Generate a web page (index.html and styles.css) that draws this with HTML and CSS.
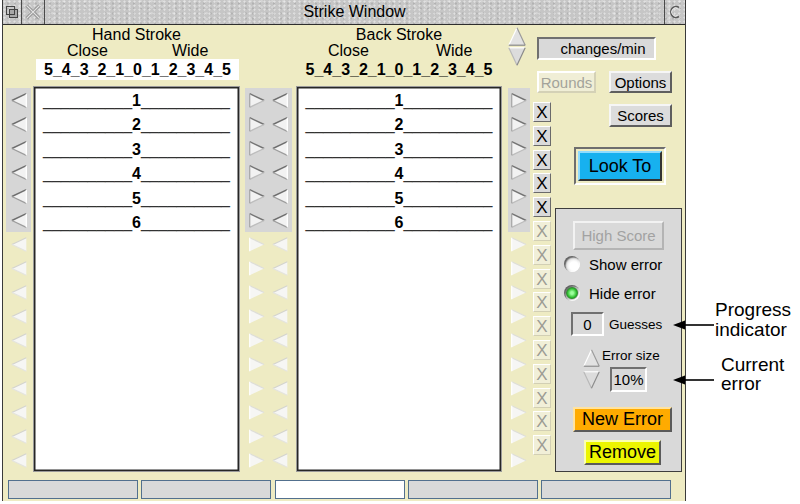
FILE: index.html
```html
<!DOCTYPE html>
<html>
<head>
<meta charset="utf-8">
<title>Strike Window</title>
<link rel="stylesheet" href="styles.css">
</head>
<body>
<svg class="defs" width="0" height="0" aria-hidden="true">
  <defs>
    <symbol id="tl" viewBox="0 0 16 15"><path d="M15.3 0.7 L0.9 7.5 L15.3 14.3 Z" fill="#f2f2f2"/><path d="M15.3 0.7 L0.9 7.5" stroke="#6e6e6e" stroke-width="1.4" fill="none"/><path d="M0.9 7.5 L15.3 14.3" stroke="#9c9c9c" stroke-width="1.3" fill="none"/><path d="M15.3 0.7 V14.3" stroke="#ffffff" stroke-width="1.3" fill="none"/></symbol>
    <symbol id="tli" viewBox="0 0 16 15"><path d="M15.3 0.7 L0.9 7.5 L15.3 14.3 Z" fill="#f6f6f4"/><path d="M15.3 0.7 L0.9 7.5" stroke="#d4d4ce" stroke-width="1.2" fill="none"/><path d="M0.9 7.5 L15.3 14.3" stroke="#e4e4de" stroke-width="1.2" fill="none"/></symbol>
    <symbol id="tr" viewBox="0 0 16 15"><path d="M0.7 0.7 L15.1 7.5 L0.7 14.3 Z" fill="#f2f2f2"/><path d="M0.7 0.7 L15.1 7.5" stroke="#747474" stroke-width="1.4" fill="none"/><path d="M15.1 7.5 L0.7 14.3" stroke="#bdbdbd" stroke-width="1.3" fill="none"/><path d="M0.7 0.7 V14.3" stroke="#a8a8a8" stroke-width="1.3" fill="none"/></symbol>
    <symbol id="tri" viewBox="0 0 16 15"><path d="M0.7 0.7 L15.1 7.5 L0.7 14.3 Z" fill="#f6f6f4"/><path d="M0.7 0.7 L15.1 7.5" stroke="#deded8" stroke-width="1.2" fill="none"/><path d="M0.7 0.7 V14.3" stroke="#ffffff" stroke-width="1.2" fill="none"/></symbol>
    <symbol id="up" viewBox="0 0 18 19"><path d="M9 0.8 L17.2 18.2 L0.8 18.2 Z" fill="#e2e2e2"/><path d="M9 0.8 L0.8 18.2" stroke="#ffffff" stroke-width="1.2" fill="none"/><path d="M9 0.8 L17.2 18.2" stroke="#9a9a9a" stroke-width="1.2" fill="none"/><path d="M0.8 18.2 H17.2" stroke="#8a8a8a" stroke-width="1.2" fill="none"/></symbol>
    <symbol id="down" viewBox="0 0 18 19"><path d="M0.8 0.8 L17.2 0.8 L9 18.2 Z" fill="#dcdcdc"/><path d="M0.8 0.8 H17.2" stroke="#ffffff" stroke-width="1.2" fill="none"/><path d="M0.8 0.8 L9 18.2" stroke="#b8b8b8" stroke-width="1.2" fill="none"/><path d="M17.2 0.8 L9 18.2" stroke="#8a8a8a" stroke-width="1.2" fill="none"/></symbol>
  </defs>
</svg>

<div class="window">
  <div class="titlebar">
    <div class="tb-icon tb-back"><svg width="14" height="14" viewBox="0 0 14 14"><rect x="4.5" y="4.5" width="8" height="8" fill="#a8a8a8" stroke="#444"/><rect x="1.5" y="1.5" width="8" height="8" fill="none" stroke="#444"/></svg></div>
    <div class="tb-icon tb-close"><svg width="18" height="18" viewBox="0 0 18 18"><path d="M2.5 2.5 L15.5 15.5 M15.5 2.5 L2.5 15.5" stroke="#8a8a8a" stroke-width="3" fill="none"/><path d="M2.5 2.5 L15.5 15.5 M15.5 2.5 L2.5 15.5" stroke="#e2e2e2" stroke-width="1.2" fill="none"/></svg></div>
    <div class="tb-title">Strike Window</div>
    <div class="tb-icon tb-toggle"><svg width="14" height="16" viewBox="0 0 14 16"><path d="M11 3.5 A5.2 5.5 0 1 0 11 12.5" stroke="#5a5a5a" stroke-width="1.6" fill="none"/><path d="M10 5 A3.8 4 0 1 0 10 11" stroke="#e8e8e8" stroke-width="1" fill="none"/></svg></div>
  </div>

  <div class="main">
    <div class="hdr hand">
      <div class="t">Hand Stroke</div>
      <div class="cw"><span>Close</span><span>Wide</span></div>
      <div class="scale white">5_4_3_2_1_0_1_2_3_4_5</div>
    </div>
    <div class="hdr back">
      <div class="t">Back Stroke</div>
      <div class="cw"><span>Close</span><span>Wide</span></div>
      <div class="scale">5_4_3_2_1_0_1_2_3_4_5</div>
    </div>

    <div class="lcol">
      <div class="acell on"><svg class="tri"><use href="#tl"/></svg></div>
      <div class="acell on"><svg class="tri"><use href="#tl"/></svg></div>
      <div class="acell on"><svg class="tri"><use href="#tl"/></svg></div>
      <div class="acell on"><svg class="tri"><use href="#tl"/></svg></div>
      <div class="acell on"><svg class="tri"><use href="#tl"/></svg></div>
      <div class="acell on"><svg class="tri"><use href="#tl"/></svg></div>
      <div class="acell"><svg class="tri"><use href="#tli"/></svg></div>
      <div class="acell"><svg class="tri"><use href="#tli"/></svg></div>
      <div class="acell"><svg class="tri"><use href="#tli"/></svg></div>
      <div class="acell"><svg class="tri"><use href="#tli"/></svg></div>
      <div class="acell"><svg class="tri"><use href="#tli"/></svg></div>
      <div class="acell"><svg class="tri"><use href="#tli"/></svg></div>
      <div class="acell"><svg class="tri"><use href="#tli"/></svg></div>
      <div class="acell"><svg class="tri"><use href="#tli"/></svg></div>
      <div class="acell"><svg class="tri"><use href="#tli"/></svg></div>
      <div class="acell"><svg class="tri"><use href="#tli"/></svg></div>
    </div>

    <div class="list hand-list">
      <div class="row">__________<b>1</b>__________</div>
      <div class="row">__________<b>2</b>__________</div>
      <div class="row">__________<b>3</b>__________</div>
      <div class="row">__________<b>4</b>__________</div>
      <div class="row">__________<b>5</b>__________</div>
      <div class="row">__________<b>6</b>__________</div>
    </div>

    <div class="mcol">
      <div class="acol c1">
        <div class="acell on"><svg class="tri"><use href="#tr"/></svg></div>
        <div class="acell on"><svg class="tri"><use href="#tr"/></svg></div>
        <div class="acell on"><svg class="tri"><use href="#tr"/></svg></div>
        <div class="acell on"><svg class="tri"><use href="#tr"/></svg></div>
        <div class="acell on"><svg class="tri"><use href="#tr"/></svg></div>
        <div class="acell on"><svg class="tri"><use href="#tr"/></svg></div>
        <div class="acell"><svg class="tri"><use href="#tri"/></svg></div>
        <div class="acell"><svg class="tri"><use href="#tri"/></svg></div>
        <div class="acell"><svg class="tri"><use href="#tri"/></svg></div>
        <div class="acell"><svg class="tri"><use href="#tri"/></svg></div>
        <div class="acell"><svg class="tri"><use href="#tri"/></svg></div>
        <div class="acell"><svg class="tri"><use href="#tri"/></svg></div>
        <div class="acell"><svg class="tri"><use href="#tri"/></svg></div>
        <div class="acell"><svg class="tri"><use href="#tri"/></svg></div>
        <div class="acell"><svg class="tri"><use href="#tri"/></svg></div>
        <div class="acell"><svg class="tri"><use href="#tri"/></svg></div>
      </div>
      <div class="acol c2">
        <div class="acell on"><svg class="tri"><use href="#tl"/></svg></div>
        <div class="acell on"><svg class="tri"><use href="#tl"/></svg></div>
        <div class="acell on"><svg class="tri"><use href="#tl"/></svg></div>
        <div class="acell on"><svg class="tri"><use href="#tl"/></svg></div>
        <div class="acell on"><svg class="tri"><use href="#tl"/></svg></div>
        <div class="acell on"><svg class="tri"><use href="#tl"/></svg></div>
        <div class="acell"><svg class="tri"><use href="#tli"/></svg></div>
        <div class="acell"><svg class="tri"><use href="#tli"/></svg></div>
        <div class="acell"><svg class="tri"><use href="#tli"/></svg></div>
        <div class="acell"><svg class="tri"><use href="#tli"/></svg></div>
        <div class="acell"><svg class="tri"><use href="#tli"/></svg></div>
        <div class="acell"><svg class="tri"><use href="#tli"/></svg></div>
        <div class="acell"><svg class="tri"><use href="#tli"/></svg></div>
        <div class="acell"><svg class="tri"><use href="#tli"/></svg></div>
        <div class="acell"><svg class="tri"><use href="#tli"/></svg></div>
        <div class="acell"><svg class="tri"><use href="#tli"/></svg></div>
      </div>
    </div>

    <div class="list back-list">
      <div class="row">__________<b>1</b>__________</div>
      <div class="row">__________<b>2</b>__________</div>
      <div class="row">__________<b>3</b>__________</div>
      <div class="row">__________<b>4</b>__________</div>
      <div class="row">__________<b>5</b>__________</div>
      <div class="row">__________<b>6</b>__________</div>
    </div>

    <div class="rgn">
      <div class="updown">
        <svg class="ud"><use href="#up"/></svg>
        <svg class="ud"><use href="#down"/></svg>
      </div>
      <div class="racol">
        <div class="acell on"><svg class="tri"><use href="#tr"/></svg></div>
        <div class="acell on"><svg class="tri"><use href="#tr"/></svg></div>
        <div class="acell on"><svg class="tri"><use href="#tr"/></svg></div>
        <div class="acell on"><svg class="tri"><use href="#tr"/></svg></div>
        <div class="acell on"><svg class="tri"><use href="#tr"/></svg></div>
        <div class="acell on"><svg class="tri"><use href="#tr"/></svg></div>
        <div class="acell"><svg class="tri"><use href="#tri"/></svg></div>
        <div class="acell"><svg class="tri"><use href="#tri"/></svg></div>
        <div class="acell"><svg class="tri"><use href="#tri"/></svg></div>
        <div class="acell"><svg class="tri"><use href="#tri"/></svg></div>
        <div class="acell"><svg class="tri"><use href="#tri"/></svg></div>
        <div class="acell"><svg class="tri"><use href="#tri"/></svg></div>
        <div class="acell"><svg class="tri"><use href="#tri"/></svg></div>
        <div class="acell"><svg class="tri"><use href="#tri"/></svg></div>
        <div class="acell"><svg class="tri"><use href="#tri"/></svg></div>
        <div class="acell"><svg class="tri"><use href="#tri"/></svg></div>
      </div>
      <div class="xcol">
        <div class="xb">X</div>
        <div class="xb">X</div>
        <div class="xb">X</div>
        <div class="xb">X</div>
        <div class="xb">X</div>
        <div class="xb off">X</div>
        <div class="xb off">X</div>
        <div class="xb off">X</div>
        <div class="xb off">X</div>
        <div class="xb off">X</div>
        <div class="xb off">X</div>
        <div class="xb off">X</div>
        <div class="xb off">X</div>
        <div class="xb off">X</div>
        <div class="xb off">X</div>
      </div>
      <div class="stack">
        <div class="field cpm">changes/min</div>
        <div class="rrow">
          <div class="btn dis rounds">Rounds</div>
          <div class="btn options">Options</div>
        </div>
        <div class="btn scores">Scores</div>
        <div class="lookf"><div class="btn look">Look To</div></div>
        <div class="panel">
          <div class="btn pdis hs">High Score</div>
          <div class="rad r1"><span class="radio"></span><span>Show error</span></div>
          <div class="rad r2"><span class="radio on"></span><span>Hide error</span></div>
          <div class="guess"><div class="field gfield">0</div><span class="glabel">Guesses</span></div>
          <div class="esz">
            <div class="eud">
              <svg class="ud2"><use href="#up"/></svg>
              <svg class="ud2"><use href="#down"/></svg>
            </div>
            <div class="eright">
              <div class="elabel">Error size</div>
              <div class="field efield">10%</div>
            </div>
          </div>
          <div class="btn newerr">New Error</div>
          <div class="btn remove">Remove</div>
        </div>
      </div>
    </div>
  </div>

  <div class="status">
    <div class="seg"></div>
    <div class="seg"></div>
    <div class="seg white"></div>
    <div class="seg"></div>
    <div class="seg"></div>
  </div>
</div>

<div class="note n1">Progress<br>indicator</div>
<svg class="pointer p1" width="42" height="12" viewBox="0 0 42 12"><path d="M10 6 H41" stroke="#000" stroke-width="1.6"/><path d="M0 6 L12 1.5 L12 10.5 Z" fill="#000"/></svg>
<div class="note n2">Current<br>error</div>
<svg class="pointer p2" width="42" height="12" viewBox="0 0 42 12"><path d="M10 6 H41" stroke="#000" stroke-width="1.6"/><path d="M0 6 L12 1.5 L12 10.5 Z" fill="#000"/></svg>
</body>
</html>
```

FILE: styles.css
```css
* { box-sizing: border-box; }

body {
  margin: 0;
  width: 800px;
  height: 504px;
  overflow: hidden;
  background: #ffffff;
  font-family: "Liberation Sans", Arial, sans-serif;
  color: #000;
  position: relative;
}

.defs { position: absolute; width: 0; height: 0; }

.window {
  margin-left: 2px;
  width: 684px;
  height: 501px;
  border-left: 1px solid #3a3a3a;
  border-right: 1px solid #3a3a3a;
  background: #eeebc3;
  display: flex;
  flex-direction: column;
}

/* title bar */
.titlebar {
  flex: none;
  height: 25px;
  display: flex;
  border-bottom: 1px solid #2e2e2e;
  background-color: #c6c6c6;
  background-image:
    radial-gradient(circle at 30% 40%, rgba(255,255,255,0.45) 0 0.8px, transparent 1.4px),
    radial-gradient(circle at 70% 70%, rgba(0,0,0,0.10) 0 0.8px, transparent 1.4px),
    radial-gradient(circle at 50% 20%, rgba(255,255,255,0.25) 0 1px, transparent 1.6px);
  background-size: 5px 4px, 7px 5px, 11px 6px;
}
.tb-icon { display: flex; align-items: center; justify-content: center; }
.tb-back { width: 19px; border-right: 1px solid #4a4a4a; }
.tb-close { width: 23px; border-right: 1px solid #4a4a4a; }
.tb-title {
  flex: 1;
  border-right: 1px solid #4a4a4a;
  text-align: center;
  font-size: 16px;
  line-height: 24px;
}
.tb-toggle { width: 20px; }

/* main grid */
.main {
  flex: none;
  display: grid;
  grid-template-columns: 30px 207px 56px 206px 183px;
  grid-template-rows: 61px 388px;
}

.hdr { padding-top: 2px; font-size: 16px; text-align: center; }
.hdr.hand { grid-column: 2; grid-row: 1; }
.hdr.back { grid-column: 4; grid-row: 1; }
.hdr .t { line-height: 16px; }
.hdr .cw { display: flex; line-height: 16px; }
.hand .cw { padding-left: 34px; gap: 64px; }
.back .cw { padding-left: 32px; gap: 67px; }
.scale {
  font-weight: bold;
  height: 21px;
  line-height: 22px;
  white-space: nowrap;
}
.scale.white { background: #fff; margin-left: 3px; width: 203px; }

/* arrow columns */
.acell {
  height: 24px;
  display: flex;
  align-items: center;
  justify-content: center;
}
.acell.on { background: #d6d6d6; }
.tri { width: 16px; height: 15px; }

.lcol { grid-column: 1; grid-row: 2; padding: 2px 0 0 3px; }
.lcol .acell { width: 25px; }

.mcol { grid-column: 3; grid-row: 2; display: flex; padding: 2px 0 0 5px; }
.mcol .c1 { width: 23px; }
.mcol .c2 { width: 24px; }

/* lists */
.list {
  grid-row: 2;
  height: 386px;
  background: #fff;
  border: 1px solid #9a9a9a;
  box-shadow: inset 0 0 0 1.5px #262626;
  padding-top: 2px;
}
.hand-list { grid-column: 2; }
.back-list { grid-column: 4; }
.list .row {
  height: 24.4px;
  line-height: 24.4px;
  text-align: center;
  font-size: 16px;
  white-space: nowrap;
  color: #333;
}
.list .row b { color: #000; }

/* right region */
.rgn {
  grid-column: 5;
  grid-row: 1 / 3;
  display: grid;
  grid-template-columns: 6px 22px 3px 18px 2px 132px;
  grid-template-rows: 63px 386px;
}
.updown {
  grid-column: 2;
  grid-row: 1;
  padding-top: 2px;
  display: flex;
  flex-direction: column;
  gap: 1px;
}
.ud { width: 18px; height: 19px; }
.racol { grid-column: 2; grid-row: 2; }
.xcol {
  grid-column: 4;
  grid-row: 2;
  padding-top: 14px;
  display: flex;
  flex-direction: column;
  gap: 3.8px;
}
.xb {
  width: 18px;
  height: 20px;
  background: #dadada;
  border: 1px solid;
  border-color: #ffffff #6a6a6a #6a6a6a #ffffff;
  font-size: 17px;
  line-height: 19px;
  text-align: center;
  color: #000;
}
.xb.off {
  background: #f1efd8;
  border-color: #ffffff #d2cfb4 #d2cfb4 #ffffff;
  color: #9c9c94;
}

.stack {
  grid-column: 4 / 7;
  grid-row: 1 / 3;
  display: flex;
  flex-direction: column;
  align-items: flex-start;
  padding-top: 12px;
}

.field {
  background: #d9d9d9;
  border: 2px solid;
  border-color: #707070 #ffffff #ffffff #707070;
  font-size: 15px;
  display: flex;
  align-items: center;
  justify-content: center;
}
.cpm { margin-left: 4px; width: 119px; height: 23px; padding-left: 13px; }

.btn {
  background: #dcdcdc;
  border: 2px solid;
  border-color: #f6f6f6 #5e5e5e #5e5e5e #f6f6f6;
  font-size: 15px;
  display: flex;
  align-items: center;
  justify-content: center;
  white-space: nowrap;
}
.btn.dis {
  background: #f0eed6;
  border-color: #ffffff #d4d1b6 #d4d1b6 #ffffff;
  color: #a3a39a;
}
.rrow { margin-top: 11px; margin-left: 4px; display: flex; gap: 13px; }
.rounds { width: 59px; height: 22px; }
.options { width: 63px; height: 22px; }
.scores { margin-top: 11px; margin-left: 76px; width: 63px; height: 23px; }

.lookf {
  margin-top: 20px;
  margin-left: 41px;
  width: 92px;
  height: 38px;
  border: 2px solid;
  border-color: #6e6e6e #ffffff #ffffff #6e6e6e;
  padding: 2px;
}
.btn.look {
  width: 100%;
  height: 100%;
  background: #17b1ef;
  border-color: #8fdcff #333 #333 #8fdcff;
  font-size: 18px;
}

.panel {
  margin-top: 23px;
  margin-left: 22px;
  width: 127px;
  height: 264px;
  background: #d9d9d9;
  border: 1px solid #3d3d3d;
  display: flex;
  flex-direction: column;
  align-items: flex-start;
}
.btn.pdis {
  background: #d9d9d9;
  border-color: #f2f2f2 #b4b4b4 #b4b4b4 #f2f2f2;
  color: #a2a2a2;
}
.hs { margin-top: 12px; margin-left: 17px; width: 91px; height: 29px; font-size: 15px; }

.rad {
  display: flex;
  align-items: center;
  gap: 9px;
  height: 22px;
  margin-left: 8px;
  font-size: 15px;
}
.r1 { margin-top: 3px; }
.r2 { margin-top: 7px; }
.radio {
  width: 16px;
  height: 16px;
  border-radius: 50%;
  background: radial-gradient(circle at 62% 62%, #ffffff 0 30%, #d2d2d2 75%);
  box-shadow: inset 1.5px 1.5px 1.5px #5e5e5e, inset -1px -1px 1px #ffffff;
}
.radio.on {
  background: radial-gradient(circle at 50% 50%, #9cff9c 0 12%, #33c233 38%, #2a8f2a 48%, #c4c4c4 58%, #e6e6e6 100%);
}

.guess { margin-top: 8px; margin-left: 15px; display: flex; align-items: center; }
.gfield { width: 33px; height: 24px; }
.glabel { margin-left: 5px; font-size: 13.5px; }

.esz { margin-top: 12px; margin-left: 27px; display: flex; }
.eud { width: 18px; display: flex; flex-direction: column; gap: 2px; }
.ud2 { width: 17px; height: 20px; }
.eright { margin-left: 1px; display: flex; flex-direction: column; align-items: flex-start; }
.elabel { font-size: 13.5px; line-height: 16px; }
.efield { margin-top: 3px; margin-left: 8px; width: 37px; height: 25px; }

.btn.newerr {
  margin-top: 15px;
  margin-left: 17px;
  width: 99px;
  height: 25px;
  background: #ffab00;
  border-color: #ffe3a0 #5a5a5a #5a5a5a #ffe3a0;
  font-size: 18px;
}
.btn.remove {
  margin-top: 8px;
  margin-left: 28px;
  width: 77px;
  height: 25px;
  background: #ecf500;
  border-color: #fbffb0 #5a5a5a #5a5a5a #fbffb0;
  font-size: 18px;
}

/* status bar */
.status {
  flex: none;
  height: 27px;
  padding: 6px 0 0 5px;
  display: flex;
  gap: 3.3px;
}
.seg {
  width: 130px;
  height: 19px;
  background: #d9d9d9;
  border: 1.5px solid #52708e;
}
.seg.white { background: #ffffff; }

/* annotations */
.note {
  position: absolute;
  font-size: 19px;
  line-height: 20px;
}
.n1 { left: 715px; top: 300px; }
.n2 { left: 721px; top: 355px; line-height: 19px; }
.pointer { position: absolute; }
.p1 { left: 673px; top: 319px; }
.p2 { left: 673px; top: 374px; }
```
